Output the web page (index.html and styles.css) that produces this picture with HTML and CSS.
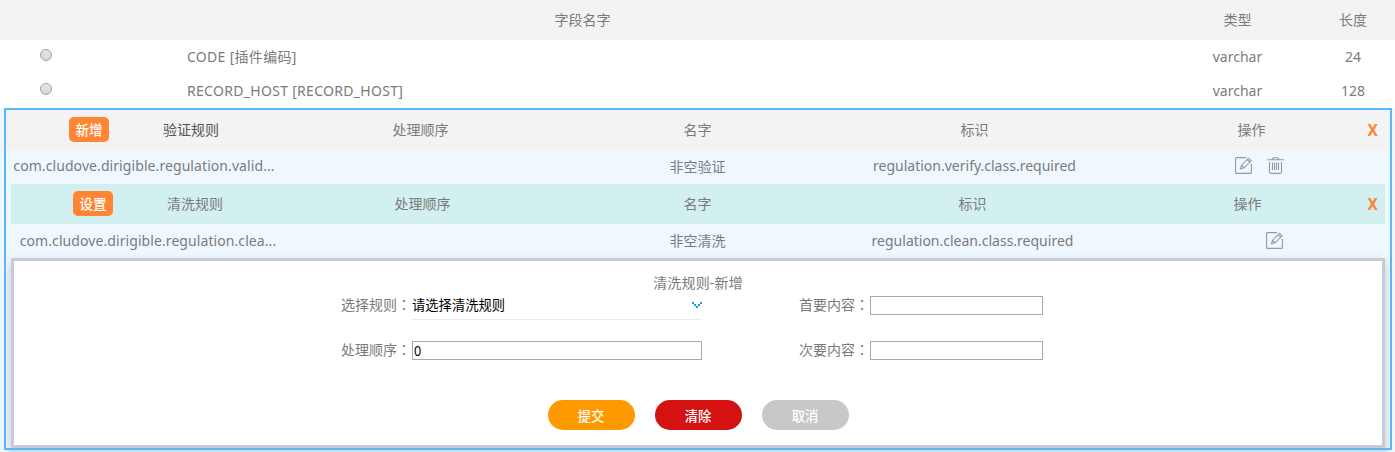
FILE: index.html
```html
<!DOCTYPE html>
<html lang="zh-CN">
<head>
<meta charset="utf-8">
<title>字段规则</title>
<link rel="stylesheet" href="styles.css">
</head>
<body>
<svg class="defs" width="0" height="0">
  <symbol id="edit" viewBox="0 0 17 17"><path d="M11 .6H1.600Q.6.600.6 1.600v13.800q0 1 1 1h13.800q1 0 1-1V7M5.500 11.900l1-3.700 7-7 2.600 2.600-7 7zM6.500 8.200l2.600 2.600M12.200 2.500l2.600 2.600"/></symbol>
  <symbol id="trash" viewBox="0 0 17 17"><path d="M.3 2.800h16.400M5 2.600C5.500 1 6 .7 7 .7h3c1 0 1.500.3 2 1.900M2.500 5v10.200c0 .8.4 1.200 1.200 1.200h9.600c.8 0 1.200-.4 1.200-1.200V5M5.500 5.500v7.500M7.500 5.500v7.500M9.500 5.500v7.500M11.500 5.500v7.500"/></symbol>
</svg>
<div class="fields">
  <div class="field-row head"><span></span><span class="name">字段名字</span><span>类型</span><span>长度</span></div>
  <div class="field-row"><i class="radio"></i><span class="key">CODE [插件编码]</span><span>varchar</span><span>24</span></div>
  <div class="field-row"><i class="radio"></i><span class="key">RECORD_HOST [RECORD_HOST]</span><span>varchar</span><span>128</span></div>
</div>
<div class="stage">
  <div class="panel">
    <div class="rules verify head">
      <div class="lead"><a class="tag">新增</a><b class="title">验证规则</b></div><span>处理顺序</span><span>名字</span><span>标识</span><span>操作</span><a class="close">X</a>
    </div>
    <div class="rules verify">
      <span class="path">com.cludove.dirigible.regulation.valid...</span><span></span><span>非空验证</span><span class="ident">regulation.verify.class.required</span><div class="ops"><svg><use href="#edit"/></svg><svg><use href="#trash"/></svg></div>
    </div>
    <div class="rules clean head">
      <div class="lead"><a class="tag">设置</a><b class="title">清洗规则</b></div><span>处理顺序</span><span>名字</span><span>标识</span><span>操作</span><a class="close">X</a>
    </div>
    <div class="rules clean">
      <span class="path">com.cludove.dirigible.regulation.clea...</span><span></span><span>非空清洗</span><span>regulation.clean.class.required</span><div class="ops"><svg><use href="#edit"/></svg></div>
    </div>
    <div class="editor">
      <div class="caption">清洗规则-新增</div>
      <div class="form">
        <span class="label">选择规则<i lang="zh-TW">：</i></span>
        <div class="select"><span>请选择清洗规则</span><svg viewBox="0 0 10 6" shape-rendering="crispEdges"><path d="M0 0h2v2h2v2h2V2h2V0h2v2H8v2H6v2H4V4H2V2H0z"/></svg></div>
        <span class="label">首要内容<i lang="zh-TW">：</i></span><div class="input"></div>
        <span class="label">处理顺序<i lang="zh-TW">：</i></span><div class="input"><span class="value">0</span></div>
        <span class="label">次要内容<i lang="zh-TW">：</i></span><div class="input"></div>
      </div>
      <div class="buttons"><a class="btn submit">提交</a><a class="btn clear">清除</a><a class="btn cancel">取消</a></div>
    </div>
  </div>
</div>
</body>
</html>
```
FILE: styles.css
```css
* { box-sizing: border-box; }
body {
  margin: 0;
  height: 452px;
  overflow: hidden;
  background: #fff;
  color: #7b7b7b;
  font: 14px/20px "Noto Sans", "Noto Sans CJK SC", sans-serif;
}
.defs { display: block; height: 0; }

.field-row {
  display: grid;
  grid-template-columns: 92px 1072px 147px 84px;
  align-items: center;
  height: 34px;
  text-align: center;
}
.field-row.head { height: 40px; background: #f3f3f3; }
.field-row .name { padding-right: 91px; }
.field-row .key { padding-left: 95px; text-align: left; letter-spacing: .3px; }
.radio {
  justify-self: center;
  width: 12px;
  height: 12px;
  margin-top: -4px;
  border: 1px solid #a0a0a0;
  border-radius: 50%;
  background: linear-gradient(#e6e6e6, #d6d6d6);
}

.stage { height: 344px; padding: 0 3px 2px 4px; background: #f0f8ff; }
.panel {
  height: 342px;
  overflow: hidden;
  border: 2px solid #5bb8f8;
  background: #f0f8ff;
  box-shadow: 0 6px 5px -4px rgba(0, 0, 0, .2);
}

.rules {
  display: grid;
  align-items: center;
  text-align: center;
  height: 34px;
}
.rules.head { position: relative; height: 40px; }
.verify { grid-template-columns: 276px 277px 277px 277px 277px; }
.verify.head { background: #f3f3f3; }
.clean { grid-template-columns: 274px 275px 275px 275px 275px; margin: 0 5px; }
.clean.head { background: #d1f0ef; }
.lead { display: flex; align-items: center; padding-left: 63px; }
.clean .lead { padding-left: 62px; }
.tag {
  width: 40px;
  height: 25px;
  margin-top: -1px;
  border-radius: 5px;
  background: #ff8533;
  color: #fff;
  font-weight: 500;
  font-size: 13.500px;
  line-height: 26px;
}
.title { margin-left: 54px; font-weight: 400; }
.verify .title { color: #555; }
.close {
  position: absolute;
  right: 12px;
  color: #ff8533;
  font-size: 15.500px;
  font-weight: 700;
}
.clean .close { right: 7px; }
.path { white-space: nowrap; letter-spacing: .08px; }
.verify .path, .ident { margin-top: -2px; }
.ops { display: flex; justify-content: center; gap: 15px; }
.verify .ops { margin-top: -3px; padding-left: 15px; }
.clean .ops { margin-top: -2px; padding-left: 53px; }
.ops svg { width: 17px; height: 17px; fill: none; stroke: #999; stroke-width: 1.100; }

.editor {
  height: 190px;
  margin: 0 5px;
  padding-top: 12px;
  border: 3px solid #c9cad9;
  background: #fff;
  box-shadow: 0 5px 10px rgba(0, 0, 0, .2);
}
.caption { height: 20px; text-align: center; letter-spacing: .15px; }
.form {
  display: grid;
  grid-template-columns: 70px 290px 168px 173px;
  grid-auto-rows: 45px;
  justify-content: center;
  padding-right: 11px;
}
.label { margin: 2px 1px 0 -1px; text-align: right; white-space: nowrap; }
.label i { font-family: "Noto Sans CJK TC", sans-serif; font-style: normal; line-height: 1; }
.input {
  height: 19px;
  margin-top: 3px;
  padding-left: 1px;
  border: 1px solid #a9a9a9;
  color: #000;
  font-size: 13.300px;
  line-height: 17px;
}
.value { display: inline-block; transform: scaleX(.9); transform-origin: left; font-size: 14px; }
.select {
  display: flex;
  align-items: center;
  justify-content: space-between;
  height: 27px;
  padding-bottom: 3px;
  border-bottom: 1px solid #ebebeb;
  color: #000;
  font-size: 13.300px;
}
.select svg { width: 10px; height: 6px; margin-top: 1px; fill: #0d9df0; }
.buttons { display: flex; justify-content: center; gap: 20px; margin-top: 17px; }
.btn {
  width: 87px;
  height: 30px;
  border-radius: 15px;
  color: #fff;
  font-size: 13.300px;
  font-weight: 500;
  line-height: 32px;
  text-align: center;
}
.submit { background: #ff9900; }
.clear { background: #d51212; }
.cancel { background: #c8c8c8; }
```
